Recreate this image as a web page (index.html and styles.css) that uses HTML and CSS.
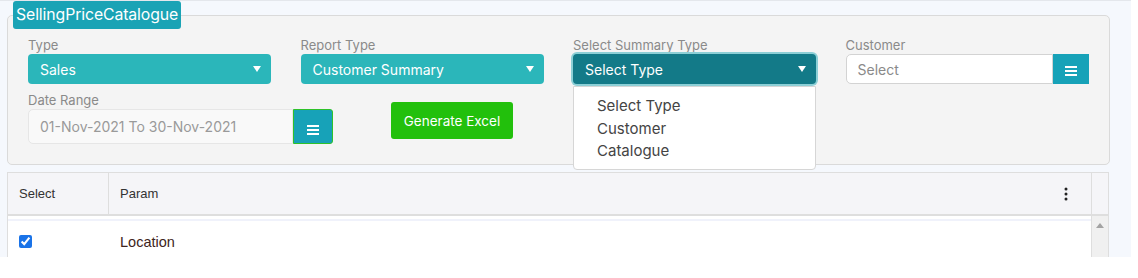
FILE: index.html
```html
<!DOCTYPE html>
<html>
<head>
<meta charset="utf-8">
<link rel="stylesheet" href="styles.css">
</head>
<body>
<div class="page">
  <fieldset class="panel">
    <legend class="badge">SellingPriceCatalogue</legend>
    <div class="row-top">
      <div class="field">
        <label class="lbl">Type</label>
        <div class="select"><span>Sales</span><i class="caret"></i></div>
      </div>
      <div class="field">
        <label class="lbl">Report Type</label>
        <div class="select"><span>Customer Summary</span><i class="caret"></i></div>
      </div>
      <div class="field drop-host">
        <label class="lbl">Select Summary Type</label>
        <div class="select active"><span>Select Type</span><i class="caret"></i></div>
        <ul class="dropdown">
          <li>Select Type</li>
          <li>Customer</li>
          <li>Catalogue</li>
        </ul>
      </div>
      <div class="field">
        <label class="lbl">Customer</label>
        <div class="group">
          <div class="input cust">Select</div>
          <button class="menu-btn small"><i class="bars"></i></button>
        </div>
      </div>
    </div>
    <div class="row-bottom">
      <div class="field">
        <label class="lbl">Date Range</label>
        <div class="group">
          <div class="input date">01-Nov-2021 To 30-Nov-2021</div>
          <button class="menu-btn tall"><i class="bars"></i></button>
        </div>
      </div>
      <button class="excel">Generate Excel</button>
    </div>
  </fieldset>

  <div class="grid">
    <div class="grid-main">
      <div class="thead">
        <div class="th sel">Select</div>
        <div class="th param">Param</div>
        <div class="th kebab">
          <svg width="4" height="14" viewBox="0 0 4 14"><circle cx="2" cy="2" r="1.5" fill="#222"/><circle cx="2" cy="7" r="1.5" fill="#222"/><circle cx="2" cy="12" r="1.5" fill="#222"/></svg>
        </div>
      </div>
      <div class="tbody">
        <div class="tr">
          <div class="td sel"><input type="checkbox" checked></div>
          <div class="td param loc">Location</div>
        </div>
      </div>
    </div>
    <div class="scroll">
      <div class="scroll-head"></div>
      <div class="scroll-track"><i class="up"></i></div>
    </div>
  </div>
</div>
</body>
</html>
```
FILE: styles.css
```css
* { box-sizing: border-box; }
html, body { margin: 0; padding: 0; background: #ffffff; }
body { font-family: "Inter", "Open Sans", sans-serif; }

.page {
  width: 1131px;
  height: 257px;
  background: #f5f8fd;
  border-top: 1px solid #e4e7ec;
  overflow: hidden;
  padding-left: 7px;
}

.panel {
  margin: 0;
  width: 1102px;
  height: 164px;
  background: #f4f4f4;
  border: 1px solid #dadada;
  border-radius: 5px;
  padding: 0 20px 0 20px;
}

.badge {
  background: #1aa3b5;
  color: #fff;
  font-size: 15.8px;
  line-height: 28px;
  height: 28px;
  padding: 0 3px;
  margin-left: -15px;
  border-radius: 3px;
  letter-spacing: -0.1px;
}

.row-top {
  display: grid;
  grid-template-columns: repeat(4, 243px);
  column-gap: 29.5px;
  margin-top: 7px;
}

.field { display: flex; flex-direction: column; position: relative; }

.lbl {
  font-size: 13px;
  color: #8a8a8a;
  line-height: 18px;
  height: 18px;
}

.select {
  height: 30px;
  background: #2bb6ba;
  border-radius: 4px;
  color: #fff;
  font-size: 14px;
  display: flex;
  align-items: center;
  justify-content: space-between;
  padding: 0 10px 0 12px;
}
.select.active {
  background: #137a88;
  box-shadow: 0 0 0 2px #8ccfd6;
}
.caret {
  width: 0; height: 0;
  border-left: 4px solid transparent;
  border-right: 4px solid transparent;
  border-top: 6px solid #fff;
}

.dropdown {
  position: absolute;
  top: 50px;
  left: 0;
  width: 243px;
  margin: 0;
  list-style: none;
  background: #fff;
  border: 1px solid #d6d6d6;
  border-radius: 0 0 4px 4px;
  padding: 8px 0 6px 23px;
  z-index: 5;
}
.dropdown li {
  font-size: 15px;
  line-height: 22.5px;
  color: #444;
}

.group { display: flex; }
.input {
  background: #fff;
  border: 1px solid #d3d3d3;
  border-radius: 5px 0 0 5px;
  font-size: 14px;
  display: flex;
  align-items: center;
  padding-left: 11px;
}
.input.cust { width: 208px; height: 30px; color: #8a8a8a; }
.input.date {
  width: 265px; height: 35px;
  background: #f9f9f9;
  border-color: #e6e6e6;
  color: #9a9a9a;
  font-size: 14px;
}

.menu-btn {
  border: none;
  background: #17a2b8;
  display: flex;
  align-items: center;
  justify-content: center;
  padding: 4px 0 0 0;
  cursor: pointer;
}
.menu-btn.small { width: 36px; height: 30px; }
.menu-btn.tall {
  width: 40px; height: 35px;
  border: 1px solid #2ec22a;
  border-radius: 0 3px 3px 0;
  padding-top: 6px;
}
.bars {
  width: 12px; height: 10px;
  background: linear-gradient(#fff 0 2px, transparent 2px 4px, #fff 4px 6px, transparent 6px 8px, #fff 8px 10px);
}

.row-bottom {
  display: flex;
  align-items: flex-start;
  margin-top: 7px;
}
.excel {
  margin-left: 58px;
  margin-top: 11px;
  width: 122px;
  height: 37px;
  background: #22c00c;
  color: #fff;
  border: none;
  border-radius: 3px;
  font-family: inherit;
  font-size: 13.5px;
  padding: 0;
}

.grid {
  display: flex;
  width: 1102px;
  margin-top: 7px;
  border: 1px solid #dedede;
  border-bottom: none;
  background: #fff;
  height: 120px;
}
.grid-main { flex: 1; }
.thead {
  display: flex;
  height: 43px;
  background: #f5f5f8;
  border-bottom: 2px solid #dedede;
  font-family: "Liberation Sans", Arial, sans-serif;
  font-size: 13px;
  color: #333;
}
.th { display: flex; align-items: center; }
.th.sel { width: 101px; padding-left: 11px; border-right: 1px solid #dedede; }
.th.param { flex: 1; padding-left: 11px; }
.th.kebab { width: 56px; padding-left: 29px; }

.tbody { border-top: 2px solid #f0f2fb; margin-top: 3px; }
.tr { display: flex; height: 41px; align-items: center; }
.td.sel { width: 101px; padding-left: 11px; display: flex; align-items: center; }
.td.sel input { margin: 0; width: 13px; height: 13px; accent-color: #1a73e8; }
.td.param { padding-left: 11px; }
.loc {
  font-family: "Liberation Sans", Arial, sans-serif;
  font-size: 14.5px;
  color: #3e2420;
}

.scroll { width: 17px; border-left: 1px solid #dedede; display: flex; flex-direction: column; }
.scroll-head { height: 43px; background: #f5f5f8; border-bottom: 2px solid #dedede; }
.scroll-track { flex: 1; background: #f0f0f0; display: flex; justify-content: center; padding-top: 7px; }
.up {
  width: 0; height: 0;
  border-left: 4px solid transparent;
  border-right: 4px solid transparent;
  border-bottom: 5px solid #a3a3a3;
}
```
